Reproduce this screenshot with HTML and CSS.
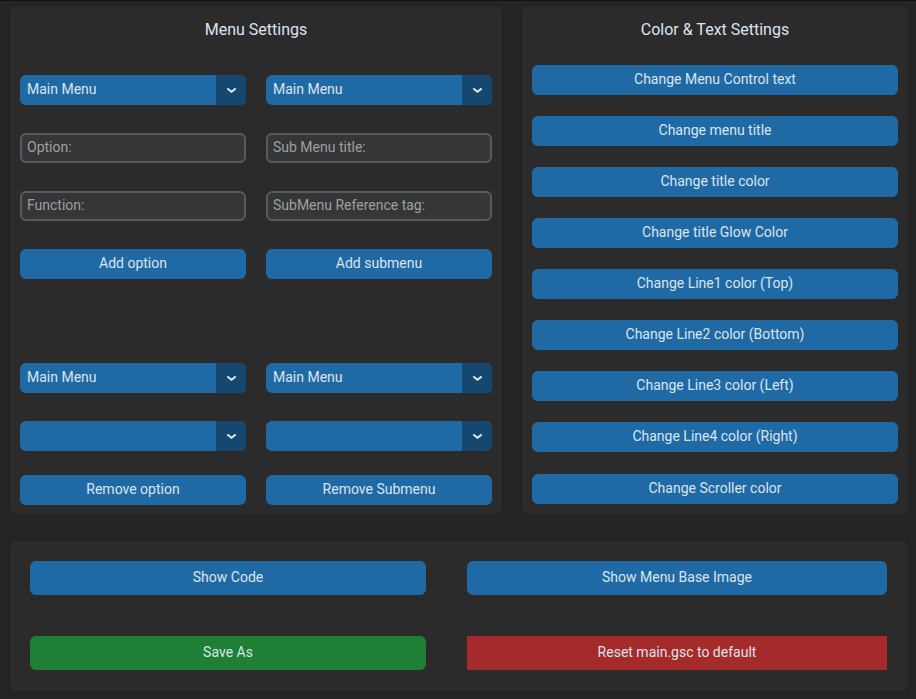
FILE: index.html
```html
<!DOCTYPE html>
<html>
<head>
<meta charset="utf-8">
<link rel="stylesheet" href="styles.css">
</head>
<body>
<div class="app">
  <div class="top">
    <section class="panel menu-panel">
      <h2 class="title">Menu Settings</h2>
      <div class="grid">
        <div class="dropdown"><span class="dd-text">Main Menu</span><span class="dd-arrow"><svg width="9" height="5" viewBox="0 0 9 5"><path d="M1 1 L4.5 3.8 L8 1" fill="none" stroke="#dce4ee" stroke-width="2" stroke-linecap="square"/></svg></span></div>
        <div class="dropdown"><span class="dd-text">Main Menu</span><span class="dd-arrow"><svg width="9" height="5" viewBox="0 0 9 5"><path d="M1 1 L4.5 3.8 L8 1" fill="none" stroke="#dce4ee" stroke-width="2" stroke-linecap="square"/></svg></span></div>
        <div class="entry">Option:</div>
        <div class="entry">Sub Menu title:</div>
        <div class="entry">Function:</div>
        <div class="entry">SubMenu Reference tag:</div>
        <div class="btn">Add option</div>
        <div class="btn">Add submenu</div>
        <div class="dropdown spaced"><span class="dd-text">Main Menu</span><span class="dd-arrow"><svg width="9" height="5" viewBox="0 0 9 5"><path d="M1 1 L4.5 3.8 L8 1" fill="none" stroke="#dce4ee" stroke-width="2" stroke-linecap="square"/></svg></span></div>
        <div class="dropdown spaced"><span class="dd-text">Main Menu</span><span class="dd-arrow"><svg width="9" height="5" viewBox="0 0 9 5"><path d="M1 1 L4.5 3.8 L8 1" fill="none" stroke="#dce4ee" stroke-width="2" stroke-linecap="square"/></svg></span></div>
        <div class="dropdown"><span class="dd-text"></span><span class="dd-arrow"><svg width="9" height="5" viewBox="0 0 9 5"><path d="M1 1 L4.5 3.8 L8 1" fill="none" stroke="#dce4ee" stroke-width="2" stroke-linecap="square"/></svg></span></div>
        <div class="dropdown"><span class="dd-text"></span><span class="dd-arrow"><svg width="9" height="5" viewBox="0 0 9 5"><path d="M1 1 L4.5 3.8 L8 1" fill="none" stroke="#dce4ee" stroke-width="2" stroke-linecap="square"/></svg></span></div>
        <div class="btn tight">Remove option</div>
        <div class="btn tight">Remove Submenu</div>
      </div>
    </section>
    <section class="panel color-panel">
      <h2 class="title">Color &amp; Text Settings</h2>
      <div class="stack">
        <div class="btn">Change Menu Control text</div>
        <div class="btn">Change menu title</div>
        <div class="btn">Change title color</div>
        <div class="btn">Change title Glow Color</div>
        <div class="btn">Change Line1 color (Top)</div>
        <div class="btn">Change Line2 color (Bottom)</div>
        <div class="btn">Change Line3 color (Left)</div>
        <div class="btn">Change Line4 color (Right)</div>
        <div class="btn">Change Scroller color</div>
      </div>
    </section>
  </div>
  <section class="panel bottom">
    <div class="btn big">Show Code</div>
    <div class="btn big">Show Menu Base Image</div>
    <div class="btn big green">Save As</div>
    <div class="btn big red">Reset main.gsc to default</div>
  </section>
</div>
</body>
</html>
```
FILE: styles.css
```css
* { box-sizing: border-box; }
html, body { margin: 0; padding: 0; }
body {
  background: #242424;
  border-top: 1px solid #111111;
  width: 916px;
  height: 699px;
  overflow: hidden;
  font-family: Roboto, "Liberation Sans", sans-serif;
  font-size: 14px;
  color: #dce4ee;
}
.app {
  padding: 5px 8px 0 10px;
}
.top {
  display: flex;
  gap: 20px;
  height: 508px;
}
.panel {
  background: #2b2b2b;
  border-radius: 6px;
}
.menu-panel {
  width: 492px;
  padding: 0 10px;
}
.color-panel {
  width: 386px;
  padding: 0 10px;
}
.title {
  margin: 0;
  height: 59px;
  padding-top: 14px;
  font-size: 16px;
  font-weight: 400;
  line-height: 20px;
  text-align: center;
}
.grid {
  display: grid;
  grid-template-columns: 226px 226px;
  column-gap: 20px;
  row-gap: 28px;
  margin-top: 10px;
}
.dropdown {
  height: 30px;
  display: flex;
  border-radius: 6px;
  overflow: hidden;
  background: #1f6aa5;
}
.dropdown.spaced { margin-top: 56px; }
.dd-text {
  flex: 1;
  padding-left: 7px;
  line-height: 28px;
}
.dd-arrow {
  width: 30px;
  background: #144870;
  display: flex;
  align-items: center;
  justify-content: center;
}
.dd-arrow svg { display: block; }
.entry {
  height: 30px;
  background: #343638;
  border: 2px solid #565b5e;
  border-radius: 6px;
  padding-left: 5px;
  line-height: 25px;
  color: #9ea0a2;
}
.btn {
  height: 30px;
  background: #1f6aa5;
  border-radius: 6px;
  text-align: center;
  line-height: 28px;
}
.btn.tight { margin-top: -4px; }
.stack {
  display: flex;
  flex-direction: column;
  gap: 21px;
  margin-top: 0;
}
.stack .btn:last-child { margin-top: 1px; }
.bottom {
  margin-top: 27px;
  width: 898px;
  height: 150px;
  display: grid;
  grid-template-columns: 396px 420px;
  column-gap: 41px;
  row-gap: 41px;
  padding: 20px 21px 21px 20px;
}
.btn.big {
  height: 34px;
  line-height: 32px;
}
.green { background: #1f7f35; }
.red { background: #a52a2a; border-radius: 0; }
```
